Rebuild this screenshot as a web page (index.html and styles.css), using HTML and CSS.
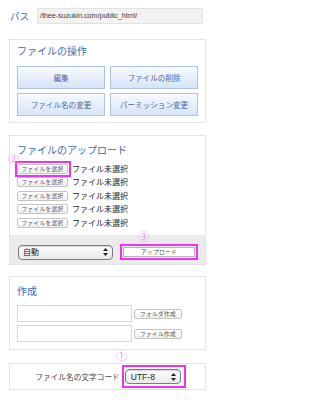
FILE: index.html
```html
<!DOCTYPE html>
<html lang="ja">
<head>
<meta charset="utf-8">
<link rel="stylesheet" href="styles.css">
</head>
<body>
<div class="path-row">
  <span class="path-label">パス</span>
  <div class="path-field">/thee-suzukin.com/public_html/</div>
</div>

<section class="panel ops">
  <h2 class="title">ファイルの操作</h2>
  <div class="btn-grid">
    <button class="op">編集</button>
    <button class="op">ファイルの削除</button>
    <button class="op">ファイル名の変更</button>
    <button class="op">パーミッション変更</button>
  </div>
</section>

<section class="panel upload">
  <h2 class="title">ファイルのアップロード</h2>
  <span class="mark mark2">②</span>
  <ul class="files">
    <li><span class="hl-box"><span class="choose">ファイルを選択</span></span><span class="none">ファイル未選択</span></li>
    <li><span class="choose">ファイルを選択</span><span class="none">ファイル未選択</span></li>
    <li><span class="choose">ファイルを選択</span><span class="none">ファイル未選択</span></li>
    <li><span class="choose">ファイルを選択</span><span class="none">ファイル未選択</span></li>
    <li><span class="choose">ファイルを選択</span><span class="none">ファイル未選択</span></li>
  </ul>
  <div class="upload-bar">
    <div class="select auto"><span>自動</span>
      <svg class="arrows" width="5" height="8" viewBox="0 0 5 8"><path d="M2.5 0L5 3H0Z M2.5 8L5 5H0Z" fill="#222"/></svg>
    </div>
    <span class="mark mark3">③</span>
    <span class="up-wrap"><button class="up">アップロード</button></span>
  </div>
</section>

<section class="panel create">
  <h2 class="title">作成</h2>
  <div class="create-row"><span class="field"></span><button class="small">フォルダ作成</button></div>
  <div class="create-row"><span class="field"></span><button class="small">ファイル作成</button></div>
</section>

<section class="panel enc">
  <span class="mark mark1">①</span>
  <span class="enc-label">ファイル名の文字コード</span>
  <span class="enc-wrap">
    <span class="select utf"><span>UTF-8</span>
      <svg class="arrows" width="5" height="8" viewBox="0 0 5 8"><path d="M2.5 0L5 3H0Z M2.5 8L5 5H0Z" fill="#222"/></svg>
    </span>
  </span>
</section>
</body>
</html>
```

FILE: styles.css
```css
* { box-sizing: border-box; }
body {
  margin: 0;
  width: 215px;
  background: #fff;
  font-family: "Noto Sans CJK JP", "Liberation Sans", sans-serif;
  color: #333;
}
.path-row {
  display: flex;
  align-items: center;
  padding: 8px 0 0 10px;
  height: 24px;
}
.path-label {
  width: 27px;
  font-size: 9.5px;
  line-height: 16px;
  color: #3d6bb3;
}
.path-field {
  width: 166px;
  height: 16px;
  background: #f2f2f2;
  border: 1px solid #e2e2e2;
  font-family: "Liberation Sans", sans-serif;
  font-size: 7.3px;
  line-height: 14px;
  padding-left: 2px;
  color: #444;
  letter-spacing: -0.1px;
}
.panel {
  position: relative;
  margin: 0 9px;
  border: 1px solid #e3e3e3;
  background: #fff;
}
.title {
  margin: 0;
  font-size: 10px;
  line-height: 12px;
  font-weight: normal;
  color: #3d6bb3;
}
.ops {
  margin-top: 15px;
  padding: 5px 7px 6px;
}
.ops .title { margin-bottom: 9px; }
.btn-grid {
  display: grid;
  grid-template-columns: 1fr 1fr;
  column-gap: 5px;
  row-gap: 4px;
}
.op {
  height: 23px;
  padding: 0;
  border: 1px solid #aec3e3;
  background: linear-gradient(#f7faff, #d6e4f7);
  font-family: inherit;
  font-size: 7.6px;
  color: #4a6aa6;
}
.upload {
  margin-top: 12px;
  padding: 8px 7px 0;
}
.upload .title { margin-bottom: 6px; }
.mark {
  position: absolute;
  font-size: 11px;
  line-height: 11px;
  color: #f48cf4;
}
.mark2 { left: -2px; top: 17px; }
.files {
  list-style: none;
  margin: 0;
  padding: 0;
}
.files li {
  height: 13.5px;
  display: flex;
  align-items: center;
}
.choose {
  display: block;
  width: 51px;
  height: 10px;
  border: 1px solid #c4c4c4;
  border-radius: 2px;
  background: linear-gradient(#fff, #f0f0f0);
  font-size: 5.6px;
  line-height: 8px;
  text-align: center;
  color: #555;
  letter-spacing: 0.4px;
}
.hl-box {
  display: block;
  margin: 0 -3px 0 -2px;
  padding: 1px 1px 1px 0;
  border: 2px solid #ee33ee;
}
.none {
  margin-left: 4px;
  font-size: 8px;
  line-height: 10px;
  color: #222;
}
.upload-bar {
  position: relative;
  margin: 5.5px -7px 0;
  height: 29px;
  background: #ebebeb;
  display: flex;
  align-items: center;
  padding: 5px 7px 0 8px;
}
.select {
  display: flex;
  align-items: center;
  justify-content: space-between;
  height: 15px;
  border: 1px solid #7a7a7a;
  border-radius: 4px;
  background: linear-gradient(#fdfdfd, #e9e9e9);
  box-shadow: inset 0 1px 1px rgba(0,0,0,0.15);
  font-size: 8px;
  line-height: 12px;
  color: #222;
  padding: 0 4px 0 4px;
}
.auto { width: 95px; }
.mark3 { left: 128px; top: -4px; }
.up-wrap {
  margin-left: 7px;
  width: 78px;
  height: 16px;
  border: 2px solid #ee33ee;
  padding: 1px;
  display: flex;
}
.up {
  flex: 1;
  padding: 0;
  border: 1px solid #b5b5b5;
  background: #fff;
  font-family: inherit;
  font-size: 5.6px;
  line-height: 8px;
  color: #444;
  letter-spacing: 0.4px;
}
.create {
  margin-top: 11px;
  padding: 8px 7px 7px;
}
.create .title { margin-bottom: 8px; }
.create-row {
  display: flex;
  align-items: center;
  height: 17px;
}
.create-row + .create-row { margin-top: 3px; }
.field {
  width: 115px;
  height: 17px;
  border: 1px solid #d6d6d6;
  background: #fff;
}
.small {
  margin-left: 2px;
  width: 48px;
  height: 10px;
  padding: 0;
  border: 1px solid #c4c4c4;
  border-radius: 2px;
  background: linear-gradient(#fff, #efefef);
  font-family: inherit;
  font-size: 5.6px;
  line-height: 8px;
  color: #555;
  letter-spacing: 0.4px;
}
.enc {
  margin-top: 13px;
  height: 27px;
  display: flex;
  align-items: center;
  justify-content: center;
  padding-left: 6px;
}
.mark1 { left: 106px; top: -14px; }
.enc-label {
  font-size: 7.7px;
  line-height: 10px;
  color: #444;
}
.enc-wrap {
  margin-left: 2px;
  width: 64px;
  height: 23px;
  border: 2px solid #ee33ee;
  padding: 2px 3px 2px 1px;
  display: flex;
}
.utf {
  flex: 1;
  font-family: "Liberation Sans", sans-serif;
  font-size: 8.5px;
  padding: 0 4px 0 5px;
}
```
